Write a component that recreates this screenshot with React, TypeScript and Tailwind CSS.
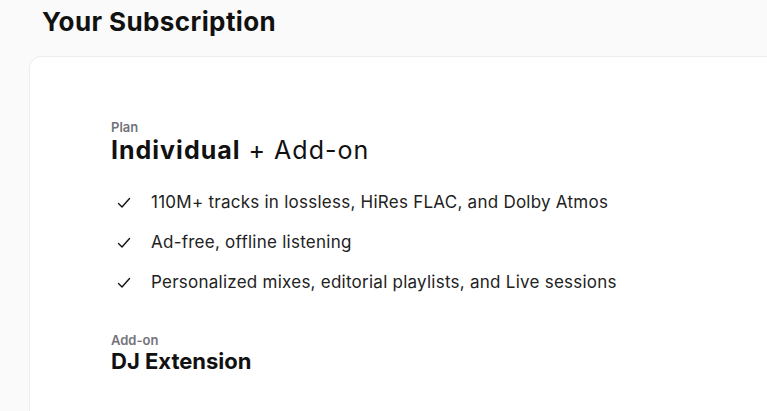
import React from 'react';

const features = [
  '110M+ tracks in lossless, HiRes FLAC, and Dolby Atmos',
  'Ad-free, offline listening',
  'Personalized mixes, editorial playlists, and Live sessions',
];

const Check: React.FC = () => (
  <svg width="14" height="12" viewBox="0 0 14 12" fill="none" className="shrink-0">
    <path d="M1.5 6.5 L5 10 L12.5 1.5" stroke="#111" strokeWidth="1.4" strokeLinecap="round" strokeLinejoin="round" />
  </svg>
);

const App: React.FC = () => {
  return (
    <div className="h-[411px] bg-[#fafafa] text-[#111] overflow-hidden" style={{ fontFamily: 'Inter, "Noto Sans", sans-serif' }}>
      <h1 className="pl-[42px] pt-[6px] text-[26px] font-bold leading-[32px] tracking-[0.4px]">Your Subscription</h1>
      <div className="ml-[29px] mt-[18px] -mr-4 min-h-[400px] rounded-xl border border-[#ececec] bg-white pl-[81px] pt-[62px]">
        <p className="text-[13px] font-semibold leading-4 text-[#73737a]">Plan</p>
        <p className="text-[25px] leading-[30px] tracking-[1px]">
          <span className="font-bold">Individual</span> + Add-on
        </p>
        <ul className="mt-[27px] space-y-[19px]">
          {features.map((f) => (
            <li key={f} className="flex items-center gap-[20px] pl-[6px] text-[17px] leading-[21px] tracking-[0.25px] text-[#222]">
              <Check />
              <span>{f}</span>
            </li>
          ))}
        </ul>
        <p className="mt-[39px] text-[13px] font-semibold leading-4 text-[#73737a]">Add-on</p>
        <p className="text-[22px] font-bold leading-[26px]">DJ Extension</p>
      </div>
    </div>
  );
};

export default App;
